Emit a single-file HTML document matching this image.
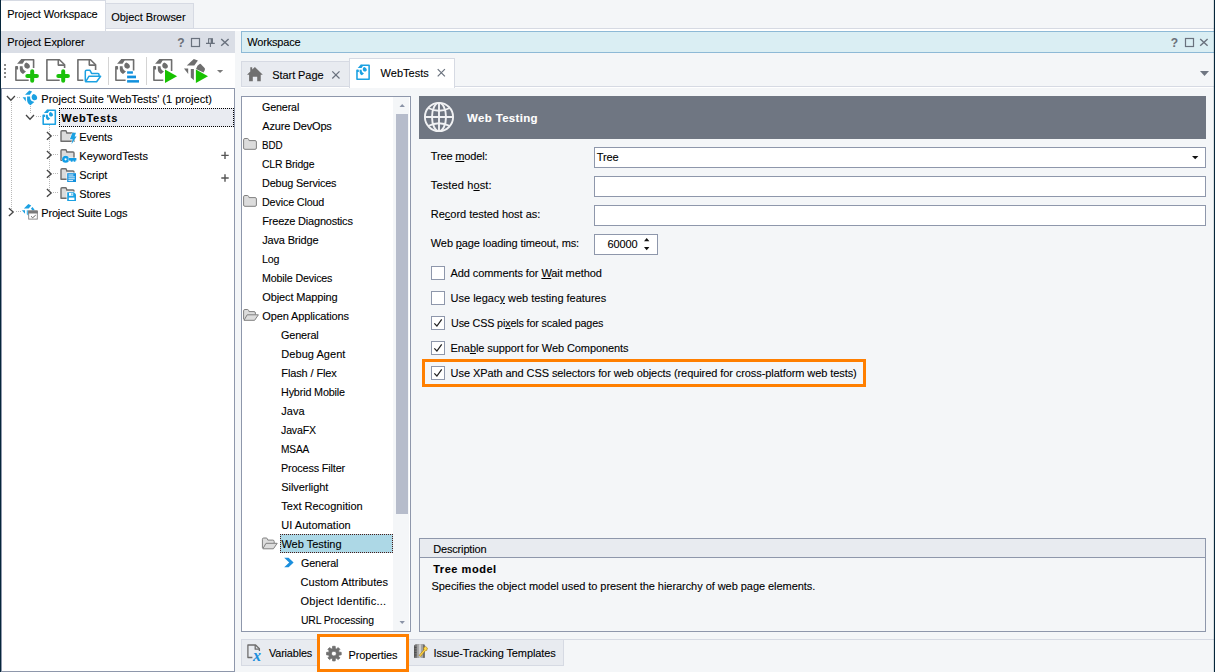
<!DOCTYPE html>
<html lang="en">
<head>
<meta charset="utf-8">
<title>TestComplete - Web Testing properties</title>
<style>
html,body{margin:0;padding:0}
body{width:1215px;height:672px;overflow:hidden;background:#f4f6f8;position:relative;
 font-family:"Liberation Sans",sans-serif;font-size:11px;line-height:14px;color:#000}
div,span,svg{position:absolute;box-sizing:border-box}
.t{white-space:pre;height:14px;transform-origin:0 0;-webkit-text-stroke:0.1px currentColor}
u{text-decoration:underline;text-underline-offset:1px}
.w{background:#fff}
.in{background:#fff;border:1px solid #8e97ab}
.cb{width:14px;height:14px;background:#fff;border:1px solid #8e97ab;left:431px}
.tab{background:#e8ebf0;border:1px solid #d6dae3}
.ln{background:#d6dae3}
</style>
</head>
<body>
<!-- window chrome -->
<div class="ln" style="left:0;top:0;width:106px;height:1px"></div>
<div class="ln" style="left:194px;top:28px;width:1020px;height:1px"></div>
<div class="w" style="left:1px;top:29px;width:1212px;height:2px"></div>
<div class="tab" style="left:105px;top:3px;width:89px;height:26px"></div>
<div class="w" style="left:1px;top:1px;width:105px;height:30px;border-right:1px solid #d6dae3"></div>

<!-- Project Explorer panel -->
<div style="left:1px;top:31px;width:234px;height:22px;background:#dadee6"></div>
<div class="w" style="left:1px;top:53px;width:234px;height:35px"></div>
<div class="w" style="left:1px;top:88px;width:234px;height:584px;border:1px solid #8e97ab"></div>
<div style="left:59px;top:108px;width:175px;height:19px;background:#e9ebf1;border:1px dotted #000"></div>

<!-- Workspace panel -->
<div style="left:241px;top:31px;width:976px;height:22px;background:#daeef3;border:1px solid #8db9d6"></div>
<div class="ln" style="left:241px;top:86px;width:973px;height:1px"></div>
<div class="w" style="left:241px;top:87px;width:972px;height:1px"></div>
<div class="tab" style="left:241px;top:61px;width:110px;height:26px"></div>
<div class="w" style="left:349px;top:58px;width:106px;height:30px;border:1px solid #d6dae3;border-bottom:0"></div>

<!-- settings tree -->
<div class="w" style="left:241px;top:96px;width:170px;height:536px;border:1px solid #8e97ab"></div>
<div style="left:393px;top:97px;width:16px;height:534px;background:#f4f6f8"></div>
<div style="left:396px;top:114px;width:12px;height:400px;background:#b6bccb"></div>
<div style="left:280px;top:534px;width:113px;height:19px;background:#add8e6;border:1px dotted #4a1c18"></div>

<!-- page header -->
<div style="left:419px;top:96px;width:787px;height:43px;background:#6f7682"></div>

<!-- inputs -->
<div class="in" style="left:594px;top:147px;width:612px;height:21px"></div>
<div class="in" style="left:594px;top:176px;width:612px;height:21px"></div>
<div class="in" style="left:594px;top:205px;width:612px;height:21px"></div>
<div class="in" style="left:594px;top:234px;width:64px;height:21px"></div>

<!-- checkboxes -->
<div class="cb" style="top:266px"></div>
<div class="cb" style="top:291px"></div>
<div class="cb" style="top:316px"></div>
<div class="cb" style="top:341px"></div>
<div class="cb" style="top:366px"></div>
<div style="left:422px;top:359px;width:444px;height:28px;border:3px solid #ff7f00"></div>

<!-- description -->
<div style="left:419px;top:538px;width:787px;height:94px;border:1px solid #8e97ab"></div>
<div style="left:420px;top:539px;width:785px;height:19px;background:#e8ebf0;border-bottom:1px solid #8e97ab"></div>

<!-- bottom tabs -->
<div class="ln" style="left:241px;top:639px;width:973px;height:1px"></div>
<div class="tab" style="left:241px;top:639px;width:77px;height:27px"></div>
<div class="tab" style="left:408px;top:639px;width:156px;height:27px"></div>
<div class="w" style="left:317px;top:634px;width:92px;height:38px;border:3px solid #ff7f00"></div>

<svg width="1215" height="672" viewBox="0 0 1215 672" style="left:0;top:0;pointer-events:none">
<!-- ===== panel caption buttons (Project Explorer) ===== -->
<g fill="none" stroke="#69717d" stroke-width="1.2">
 <rect x="191.5" y="38.5" width="8" height="8"/>
 <path d="M221.2,39 L228.6,45.8 M228.6,39 L221.2,45.8" stroke-width="1.4"/>
 <path d="M206,43.4 h8.8 M208.6,43.2 v-4.4 h3.8 v4.4 M210.4,43.6 v3.4" stroke-width="1.1"/><path d="M211.6,38.6 v4.6" stroke-width="1.9"/>
 <rect x="1185.5" y="38.5" width="8" height="8"/>
 <path d="M1200.2,39 L1207.6,45.8 M1207.6,39 L1200.2,45.8" stroke-width="1.4"/>
</g>
<!-- ===== toolbar ===== -->
<g fill="#8a8a8a">
 <rect x="4" y="64" width="2" height="2"/><rect x="4" y="68" width="2" height="2"/><rect x="4" y="72" width="2" height="2"/><rect x="4" y="76" width="2" height="2"/>
</g>
<rect x="108" y="57" width="1" height="28" fill="#d4d4d4"/>
<rect x="146" y="57" width="1" height="28" fill="#d4d4d4"/>
<!-- icon 1: new project suite item -->
<g transform="translate(15,58)">
 <g fill="none" stroke="#6e6e6e" stroke-width="1.6" stroke-linejoin="round">
  <path d="M6.3,1.8 H18.6 V10"/><path d="M13.7,22.2 H0.9 V8.9 H2.3 V11.4"/>
 </g>
 <g fill="#6e6e6e">
  <path d="M6.3,1 L10.2,1.6 L7.6,5.7 L2.1,5.7Z"/>
  <path d="M11.2,4.4 C13.5,5 15,6.8 14.9,8.6 C14.8,10.3 13.2,11 11.6,10.6 C10,10.2 9,8.6 9.3,7 C9.5,5.8 10.3,4.8 11.2,4.4Z"/>
  <path d="M4.8,8.2 L7.6,8.2 C7.4,10.6 8.6,12.4 11,13.4 L8,15.9 C5.8,15 4.8,13.2 4.8,11Z"/>
 </g>
 <path d="M12.3,18 H21.9 M17.2,13.3 V22.8" stroke="#1bc10b" stroke-width="4" stroke-linecap="round" fill="none"/>
</g>
<!-- icon 2: new document -->
<g transform="translate(46,58)">
 <g fill="none" stroke="#6e6e6e" stroke-width="1.6" stroke-linejoin="round">
  <path d="M13.7,22.2 H0.9 V1.8 H13.5 L18.6,6.8 V10"/><path d="M12.3,1.8 V7.1 H18.6"/>
 </g>
 <path d="M12.3,18 H21.9 M17.2,13.3 V22.8" stroke="#1bc10b" stroke-width="4" stroke-linecap="round" fill="none"/>
</g>
<!-- icon 3: open document -->
<g transform="translate(77,58)">
 <g fill="none" stroke="#6e6e6e" stroke-width="1.6" stroke-linejoin="round">
  <path d="M6.3,22.2 H0.9 V1.8 H13.5 L18.6,6.8 V12"/><path d="M12.3,1.8 V7.1 H18.6"/>
 </g>
 <g fill="#fff" stroke="#1ba1e2" stroke-width="1.5" stroke-linejoin="round">
  <path d="M8.3,23.6 V13.6 Q8.3,12.3 9.6,12.3 H13 L14.6,15.4 H21 Q22,15.4 22,16.6 V18.2"/>
  <path d="M8.6,23.8 L12,18.2 H23.6 L19.6,23.8Z"/>
 </g>
</g>
<!-- icon 4: project with bars -->
<g transform="translate(115,58)">
 <g fill="none" stroke="#6e6e6e" stroke-width="1.6" stroke-linejoin="round">
  <path d="M6.3,1.8 H18.6 V12.4"/><path d="M10.6,22.2 H0.9 V8.9 H2.3 V11.4"/>
 </g>
 <g fill="#6e6e6e">
  <path d="M6.3,1 L10.2,1.6 L7.6,5.7 L2.1,5.7Z"/>
  <path d="M11.2,4.4 C13.5,5 15,6.8 14.9,8.6 C14.8,10.3 13.2,11 11.6,10.6 C10,10.2 9,8.6 9.3,7 C9.5,5.8 10.3,4.8 11.2,4.4Z"/>
  <path d="M4.8,8.2 L7.6,8.2 C7.4,10.6 8.6,12.4 11,13.4 L8,15.9 C5.8,15 4.8,13.2 4.8,11Z"/>
 </g>
 <g fill="#1190dd"><rect x="12.1" y="13.3" width="5.8" height="2.4"/><rect x="12.1" y="17.6" width="8.9" height="2.7"/><rect x="12.1" y="22.1" width="11.9" height="2.5"/></g>
</g>
<!-- icon 5: run project -->
<g transform="translate(153,58)">
 <g fill="none" stroke="#6e6e6e" stroke-width="1.6" stroke-linejoin="round">
  <path d="M6.3,1.8 H18.6 V13"/><path d="M10.3,22.2 H0.9 V8.9 H2.3 V11.4"/>
 </g>
 <g fill="#6e6e6e">
  <path d="M6.3,1 L10.2,1.6 L7.6,5.7 L2.1,5.7Z"/>
  <path d="M11.2,4.4 C13.5,5 15,6.8 14.9,8.6 C14.8,10.3 13.2,11 11.6,10.6 C10,10.2 9,8.6 9.3,7 C9.5,5.8 10.3,4.8 11.2,4.4Z"/>
  <path d="M4.8,8.2 L7.6,8.2 C7.4,10.6 8.6,12.4 11,13.4 L8,15.9 C5.8,15 4.8,13.2 4.8,11Z"/>
 </g>
 <path d="M12,11.6 L24.1,18.3 L12,25Z" fill="#17c200"/>
</g>
<!-- icon 6: run suite -->
<g transform="translate(184,58)">
 <g fill="#6e6e6e">
  <path d="M2.8,7.6 L9.8,1 L13.9,2.6 L10.3,7.6Z"/>
  <path d="M0,10.5 H4.2 V16Z"/>
  <path d="M6.8,10.9 H9.9 V22.3 L6.8,19.5Z"/>
  <path d="M13.5,7.8 L15.6,6 Q16.4,5.6 17.2,6.4 L20.8,10.2 Q21.2,11.4 20.6,12.6 L19.5,14.5 L12,11Z"/>
 </g>
 <path d="M11.9,11.6 L24,18.3 L11.9,25Z" fill="#17c200"/>
</g>
<path d="M217,70 h6.2 l-3.1,3.1Z" fill="#7a7a7a"/>

<!-- ===== project tree ===== -->
<g fill="none" stroke="#b9b9b9" stroke-width="1" stroke-dasharray="1 1">
 <path d="M11.5,102 V212"/><path d="M17,97.5 H21"/><path d="M30.5,106 V114"/><path d="M36,116.5 H41"/>
 <path d="M49.5,125 V193"/><path d="M53,135.5 H58"/><path d="M53,154.5 H58"/><path d="M53,173.5 H58"/><path d="M53,192.5 H58"/><path d="M16,211.5 H21"/>
</g>
<g fill="none" stroke="#444" stroke-width="1.3">
 <path d="M6.9,96 L10.9,100.2 L14.9,96"/>
 <path d="M26,115 L30,119.2 L34,115"/>
 <path d="M46.9,132 L51.2,135.9 L46.9,139.8"/>
 <path d="M46.9,151 L51.2,154.9 L46.9,158.8"/>
 <path d="M46.9,170 L51.2,173.9 L46.9,177.8"/>
 <path d="M46.9,189 L51.2,192.9 L46.9,196.8"/>
 <path d="M8.9,208.2 L13.2,212.1 L8.9,216"/>
</g>
<g stroke="#555" stroke-width="1.4" fill="none">
 <path d="M221.3,155.4 h7.4 M225,151.7 v7.4"/><path d="M221.3,178 h7.4 M225,174.3 v7.4"/>
</g>
<!-- suite icon -->
<g fill="#1ba1e2" transform="translate(22.5,90.5)">
 <path d="M2.5,4.2 L6.8,0.1 L9.6,1.1 L7.4,4.2Z"/>
 <path d="M0.1,6.7 H3.3 V11Z"/>
 <path d="M4.6,6 H7.6 C7.4,9 8.6,10.4 10.6,11 L11.8,11.6 L8,14.7 C5.8,13.6 4.6,11.6 4.6,9.4Z"/>
 <path d="M11,3.4 C13.2,3.8 14.9,5.6 14.7,7.6 C14.5,9.4 12.9,10.2 11.3,9.7 C9.7,9.2 8.9,7.6 9.2,6 C9.4,4.9 10.1,3.9 11,3.4Z"/>
</g>
<!-- project icon (tree) -->
<g transform="translate(42.4,109) scale(0.71)">
 <g fill="none" stroke="#1ba1e2" stroke-width="2.2" stroke-linejoin="round">
  <path d="M6.3,1.8 H18.2 V21.6 H1.1 V8.9 H2.6 V11.4"/>
 </g>
 <g fill="#1ba1e2">
  <path d="M6.3,1 L10.2,1.6 L7.6,5.7 L2.1,5.7Z"/>
  <path d="M11.2,4.4 C13.5,5 15,6.8 14.9,8.6 C14.8,10.3 13.2,11 11.6,10.6 C10,10.2 9,8.6 9.3,7 C9.5,5.8 10.3,4.8 11.2,4.4Z"/>
  <path d="M4.8,8.2 L7.6,8.2 C7.4,10.6 8.6,12.4 11,13.4 L8,15.9 C5.8,15 4.8,13.2 4.8,11Z"/>
 </g>
</g>
<!-- folders in project tree -->
<g fill="#dcdcdc" stroke="#6e6e6e" stroke-width="1.4" stroke-linejoin="round">
 <path d="M61,141.3 V131.7 Q61,130.7 62,130.7 H65.4 Q66.2,130.7 66.4,131.6 L66.8,133 H73 Q74,133 74,134 V141.3Z"/>
 <path d="M61,160.3 V150.7 Q61,149.7 62,149.7 H65.4 Q66.2,149.7 66.4,150.6 L66.8,152 H73 Q74,152 74,153 V160.3Z"/>
 <path d="M61,179.3 V169.7 Q61,168.7 62,168.7 H65.4 Q66.2,168.7 66.4,169.6 L66.8,171 H73 Q74,171 74,172 V179.3Z"/>
 <path d="M61,198.3 V188.7 Q61,187.7 62,187.7 H65.4 Q66.2,187.7 66.4,188.6 L66.8,190 H73 Q74,190 74,191 V198.3Z"/>
</g>
<!-- events bolt -->
<path d="M72.4,132.8 H76 L74.6,136.6 H76.6 L71.5,144.2 L72.6,139.2 H69.9Z" fill="#1ba1e2" stroke="#fff" stroke-width="0.9" paint-order="stroke"/>
<!-- keyword key -->
<g stroke="#fff" stroke-width="0.8" paint-order="stroke" fill="#109de6">
 <circle cx="65.6" cy="159.3" r="3.5" stroke="#fff"/><circle cx="65.6" cy="159.3" r="1.1" fill="#fff" stroke="none"/>
 <path d="M68.4,158 H76.4 V160.4 H75.4 V161.8 H73.6 V160.4 H72.6 V161.8 H70.8 V160.4 H68.4Z"/>
</g>
<!-- script doc -->
<g>
 <rect x="66.6" y="172.6" width="9.8" height="9.8" fill="#fff"/>
 <rect x="67.2" y="173.2" width="8.8" height="8.8" fill="#1190dd"/>
 <path d="M68.4,175 H73.4 M68.4,176.9 H74.8 M68.4,178.8 H74.8 M68.4,180.6 H73" stroke="#fff" stroke-width="0.9"/>
</g>
<!-- stores floppy -->
<g>
 <rect x="66.6" y="191.6" width="9.8" height="9.8" fill="#fff"/>
 <path d="M67.2,192.2 H74 L76,194.2 V201 H67.2Z" fill="#1ba1e2"/>
 <rect x="69" y="193" width="4.2" height="2.8" fill="#fff"/><rect x="71.4" y="193.3" width="1" height="2" fill="#1ba1e2"/>
 <rect x="68.8" y="197.6" width="5.6" height="2.4" fill="#fff"/>
</g>
<!-- suite logs icon -->
<g fill="#1ba1e2" transform="translate(21.8,203.8)">
 <path d="M2.1,4.8 L6.6,0.1 L9.4,1.6 L6.9,4.8Z"/>
 <path d="M0.1,6.4 H3.2 V10Z"/>
 <path d="M4.95,6.4 H6.9 V12.2 L4.95,10.5Z" opacity=".75"/>
 <path d="M9.2,4.6 L10.8,3.2 L13,6.4 L10.5,6.6Z"/>
</g>
<g>
 <rect x="28.7" y="211" width="8.6" height="8.1" fill="#fff" stroke="#808080" stroke-width="0.9"/>
 <path d="M28.2,213.4 V211.4 Q28.2,210.4 29.2,210.4 H36.8 Q37.8,210.4 37.8,211.4 V213.4Z" fill="#7a7a7a"/>
 <path d="M31,216.3 l1.7,1.4 l3,-2.5" fill="none" stroke="#666" stroke-width="1"/>
</g>

<!-- ===== doc tabs ===== -->
<path d="M254.9,66.9 L262.8,74.8 H260.75 V81.25 H257.2 V76.7 H252.8 V81.25 H249.1 V74.8 H247 L250.3,71.5 V67.3 H252.2 V69.6Z" fill="#707070"/>
<g fill="none" stroke="#69717d" stroke-width="1.2">
 <path d="M332.3,71.3 l7.2,7.2 M339.5,71.3 l-7.2,7.2"/>
 <path d="M437.7,69.2 l7.2,7.2 M444.9,69.2 l-7.2,7.2"/>
</g>
<g transform="translate(356.2,64) scale(0.71)">
 <g fill="none" stroke="#1ba1e2" stroke-width="2.2" stroke-linejoin="round">
  <path d="M6.3,1.8 H18.2 V21.6 H1.1 V8.9 H2.6 V11.4"/>
 </g>
 <g fill="#1ba1e2">
  <path d="M6.3,1 L10.2,1.6 L7.6,5.7 L2.1,5.7Z"/>
  <path d="M11.2,4.4 C13.5,5 15,6.8 14.9,8.6 C14.8,10.3 13.2,11 11.6,10.6 C10,10.2 9,8.6 9.3,7 C9.5,5.8 10.3,4.8 11.2,4.4Z"/>
  <path d="M4.8,8.2 L7.6,8.2 C7.4,10.6 8.6,12.4 11,13.4 L8,15.9 C5.8,15 4.8,13.2 4.8,11Z"/>
 </g>
</g>
<path d="M1200,71 h9 l-4.5,5Z" fill="#6f7682"/>

<!-- ===== settings tree ===== -->
<g fill="#dcdcdc" stroke="#808080" stroke-width="1" stroke-linejoin="round">
 <path d="M243.6,148 V139.8 Q243.6,138.5 244.9,138.5 H247.4 Q248.3,138.5 248.6,139.4 L249,140.6 H255.1 Q256.4,140.6 256.4,141.9 V148 Q256.4,149.3 255.1,149.3 H244.9 Q243.6,149.3 243.6,148Z"/>
 <path d="M243.6,205 V196.8 Q243.6,195.5 244.9,195.5 H247.4 Q248.3,195.5 248.6,196.4 L249,197.6 H255.1 Q256.4,197.6 256.4,198.9 V205 Q256.4,206.3 255.1,206.3 H244.9 Q243.6,206.3 243.6,205Z"/>
</g>
<g fill="#dcdcdc" stroke="#808080" stroke-width="1" stroke-linejoin="round">
 <path d="M243.6,319.4 V310.8 Q243.6,309.5 244.9,309.5 H247.4 Q248.3,309.5 248.6,310.4 L249,311.6 H254 Q255.4,311.6 255.4,313 V314.8"/>
 <path d="M244,320.3 L247.2,314.8 H258.4 L254.6,320.3Z"/>
 <path d="M262.4,547.9 V539.3 Q262.4,538 263.7,538 H266.2 Q267.1,538 267.4,538.9 L267.8,540.1 H272.8 Q274.2,540.1 274.2,541.5 V543.3"/>
 <path d="M262.8,548.8 L266,543.3 H277.2 L273.4,548.8Z"/>
</g>
<path d="M284.2,557.8 H288.6 L293.6,562.5 L288.6,567.2 H284.2 L289.2,562.5Z" fill="#1b8fdd"/>
<path d="M399.5,107 h5.4 l-2.7,-3Z" fill="#8a93a6"/>
<path d="M399.5,621 h5.4 l-2.7,3Z" fill="#8a93a6"/>

<!-- ===== globe ===== -->
<g fill="none" stroke="#f0f1f3" stroke-width="1.9">
 <circle cx="439" cy="117" r="14.1"/>
 <ellipse cx="439" cy="117" rx="7" ry="14.1"/>
 <path d="M439,103 V131 M425,117 H453"/>
 <path d="M428.2,108 Q439,113.4 449.8,108 M428.2,126 Q439,120.6 449.8,126"/>
</g>

<!-- ===== inputs ===== -->
<path d="M1192,156 h6.4 l-3.2,3.2Z" fill="#111"/>
<path d="M644,241.2 h5.4 l-2.7,-3.2Z M644,247 h5.4 l-2.7,3.2Z" fill="#111"/>
<!-- checks -->
<g fill="none" stroke="#222" stroke-width="1.2">
 <path d="M434.3,323.4 L436.9,326 L441.7,319.3"/>
 <path d="M434.3,348.4 L436.9,351 L441.7,344.3"/>
 <path d="M434.3,373.4 L436.9,376 L441.7,369.3"/>
</g>

<!-- ===== bottom tabs ===== -->
<g fill="none" stroke="#6e6e6e" stroke-width="1.3" stroke-linejoin="round">
 <path d="M252.4,657.5 H247.9 V645 H255.6 L259.4,648.8 V651"/><path d="M255.2,645 V649.2 H259.4"/>
</g>
<path d="M326.6,652.3 L328.7,652.2 L329.2,650.9 L327.9,649.3 L329.6,647.6 L331.2,648.9 L332.5,648.4 L332.6,646.3 L335.2,646.3 L335.3,648.4 L336.6,648.9 L338.2,647.6 L339.9,649.3 L338.6,650.9 L339.1,652.2 L341.2,652.3 L341.2,654.9 L339.1,655.0 L338.6,656.3 L339.9,657.9 L338.2,659.6 L336.6,658.3 L335.3,658.8 L335.2,660.9 L332.6,660.9 L332.5,658.8 L331.2,658.3 L329.6,659.6 L327.9,657.9 L329.2,656.3 L328.7,655.0 L326.6,654.9Z M333.9,651.2 a2.4,2.4 0 1,0 0.01,0Z" fill="#707070" fill-rule="evenodd" stroke="#707070" stroke-width="0.8" stroke-linejoin="round"/>
<g>
 <path d="M414.2,645.4 L415.2,644.3 H423.6 L424.8,645.6 V657.8 H414.2Z" fill="#8c8c8c"/>
 <rect x="414.2" y="645.4" width="1.4" height="12.4" fill="#4e4e4e"/>
 <rect x="415.6" y="644.6" width="1.6" height="13.2" fill="#7a7a7a"/>
 <rect x="417.2" y="644.3" width="1.8" height="13.5" fill="#a9a9a9"/>
 <rect x="419" y="644.3" width="2.4" height="13.5" fill="#cfcfcf"/>
 <rect x="421.4" y="644.3" width="1.6" height="13.5" fill="#a4a4a4"/>
 <rect x="423" y="644.6" width="1.8" height="13.2" fill="#6e6e6e"/>
</g>
<path d="M414.4,647.5 h2.2 M414.4,650 h2.2 M414.4,652.5 h2.2 M414.4,655 h2.2" stroke="#3c3c3c" stroke-width="0.6"/>
<path d="M419.1,655.4 L424,649.6 L423.4,648 L425.4,646.4 L427.4,648 L426.8,650.4 L425.2,650.8 L420.6,656.4Z" fill="#ffd84a" stroke="#a8770a" stroke-width="0.6"/>
</svg>

<!-- window edges -->
<div style="left:0;top:0;width:1px;height:672px;background:#06263b"></div>
<div style="left:1213px;top:0;width:1px;height:672px;background:rgba(6,38,59,.12)"></div>
<div style="left:1214px;top:0;width:1px;height:672px;background:#06263b"></div>

<span class="t" style="left:7.3px;top:7.0px;letter-spacing:-0.11px">Project Workspace</span>
<span class="t" style="left:111.3px;top:10.0px;letter-spacing:-0.07px">Object Browser</span>
<span class="t" style="left:7.3px;top:35.0px;letter-spacing:-0.06px">Project Explorer</span>
<span class="t" style="left:247.3px;top:35.0px;letter-spacing:-0.19px">Workspace</span>
<span class="t" style="left:272.3px;top:68.0px;letter-spacing:-0.08px">Start Page</span>
<span class="t" style="left:380.5px;top:66.0px;letter-spacing:0.04px">WebTests</span>
<span class="t" style="left:41.3px;top:91.5px;letter-spacing:0.01px">Project Suite 'WebTests' (1 project)</span>
<span class="t" style="left:61.3px;top:110.5px;letter-spacing:0.72px;font-weight:bold">WebTests</span>
<span class="t" style="left:79.3px;top:129.5px;letter-spacing:-0.07px">Events</span>
<span class="t" style="left:79.3px;top:148.5px;letter-spacing:0.01px">KeywordTests</span>
<span class="t" style="left:79.3px;top:167.5px;letter-spacing:-0.02px">Script</span>
<span class="t" style="left:79.3px;top:186.5px;letter-spacing:-0.10px">Stores</span>
<span class="t" style="left:41.3px;top:205.5px;letter-spacing:-0.18px">Project Suite Logs</span>
<span class="t" style="left:262.3px;top:99.5px;letter-spacing:-0.15px;transform:scaleX(0.975)">General</span>
<span class="t" style="left:262.3px;top:118.5px;letter-spacing:-0.18px">Azure DevOps</span>
<span class="t" style="left:262.3px;top:137.5px;letter-spacing:-0.15px;transform:scaleX(0.894)">BDD</span>
<span class="t" style="left:262.3px;top:156.5px;letter-spacing:-0.15px;transform:scaleX(0.946)">CLR Bridge</span>
<span class="t" style="left:262.3px;top:175.5px;letter-spacing:-0.15px;transform:scaleX(0.984)">Debug Services</span>
<span class="t" style="left:262.3px;top:194.5px;letter-spacing:-0.15px;transform:scaleX(0.977)">Device Cloud</span>
<span class="t" style="left:262.3px;top:213.5px;letter-spacing:-0.21px">Freeze Diagnostics</span>
<span class="t" style="left:262.3px;top:232.5px;letter-spacing:-0.18px">Java Bridge</span>
<span class="t" style="left:262.3px;top:251.5px;letter-spacing:-0.15px;transform:scaleX(0.969)">Log</span>
<span class="t" style="left:262.3px;top:270.5px;letter-spacing:-0.15px;transform:scaleX(0.970)">Mobile Devices</span>
<span class="t" style="left:262.3px;top:289.5px;letter-spacing:-0.13px">Object Mapping</span>
<span class="t" style="left:262.3px;top:308.5px;letter-spacing:-0.12px">Open Applications</span>
<span class="t" style="left:281.3px;top:327.5px;letter-spacing:-0.15px;transform:scaleX(0.986)">General</span>
<span class="t" style="left:281.3px;top:346.5px;letter-spacing:0.05px">Debug Agent</span>
<span class="t" style="left:281.3px;top:365.5px;letter-spacing:-0.12px">Flash / Flex</span>
<span class="t" style="left:281.3px;top:384.5px;letter-spacing:-0.15px;transform:scaleX(0.979)">Hybrid Mobile</span>
<span class="t" style="left:281.3px;top:403.5px;letter-spacing:0.02px">Java</span>
<span class="t" style="left:281.3px;top:422.5px;letter-spacing:-0.15px;transform:scaleX(0.960)">JavaFX</span>
<span class="t" style="left:281.3px;top:441.5px;letter-spacing:-0.15px;transform:scaleX(0.921)">MSAA</span>
<span class="t" style="left:281.3px;top:460.5px;letter-spacing:-0.15px;transform:scaleX(0.982)">Process Filter</span>
<span class="t" style="left:281.3px;top:479.5px;letter-spacing:-0.07px">Silverlight</span>
<span class="t" style="left:281.3px;top:498.5px;letter-spacing:-0.00px">Text Recognition</span>
<span class="t" style="left:281.3px;top:517.5px;letter-spacing:0.02px">UI Automation</span>
<span class="t" style="left:281.4px;top:536.5px;letter-spacing:0.01px">Web Testing</span>
<span class="t" style="left:300.6px;top:555.5px;letter-spacing:-0.15px;transform:scaleX(0.978)">General</span>
<span class="t" style="left:300.6px;top:574.5px;letter-spacing:0.03px">Custom Attributes</span>
<span class="t" style="left:300.6px;top:593.5px;letter-spacing:0.19px">Object Identific...</span>
<span class="t" style="left:300.6px;top:612.5px;letter-spacing:-0.15px;transform:scaleX(0.946)">URL Processing</span>
<span class="t" style="left:467.1px;top:111.0px;letter-spacing:0.32px;font-weight:bold;color:#fff;font-size:11.5px">Web Testing</span>
<span class="t" style="left:430.8px;top:149.0px;letter-spacing:-0.15px">Tree <u>m</u>odel:</span>
<span class="t" style="left:430.8px;top:178.0px;letter-spacing:0.13px">Tested h<u>o</u>st:</span>
<span class="t" style="left:430.8px;top:207.0px;letter-spacing:-0.03px">Re<u>c</u>ord tested host as:</span>
<span class="t" style="left:430.8px;top:236.0px;letter-spacing:-0.11px">Web <u>p</u>age loading timeout, ms:</span>
<span class="t" style="left:596.8px;top:150.0px;letter-spacing:-0.14px">Tree</span>
<span class="t" style="left:607.5px;top:237.0px;letter-spacing:-0.12px">60000</span>
<span class="t" style="left:450.6px;top:266.0px;letter-spacing:-0.09px">Add comments for <u>W</u>ait method</span>
<span class="t" style="left:450.6px;top:291.0px;letter-spacing:-0.01px">Use legac<u>y</u> web testing features</span>
<span class="t" style="left:450.6px;top:316.0px;letter-spacing:-0.15px;transform:scaleX(0.979)">Use CSS pi<u>x</u>els for scaled pages</span>
<span class="t" style="left:450.6px;top:341.0px;letter-spacing:-0.09px">Ena<u>b</u>le support for Web Components</span>
<span class="t" style="left:450.6px;top:366.0px;letter-spacing:-0.08px">Use XPath and CSS selectors for web ob<u>j</u>ects (required for cross-platform web tests)</span>
<span class="t" style="left:433.2px;top:542.0px;letter-spacing:-0.16px">Description</span>
<span class="t" style="left:433.2px;top:561.5px;letter-spacing:0.54px;font-weight:bold">Tree model</span>
<span class="t" style="left:431.5px;top:579.0px;letter-spacing:-0.05px">Specifies the object model used to present the hierarchy of web page elements.</span>
<span class="t" style="left:177.3px;top:36.0px;letter-spacing:-0.54px;font-weight:bold;color:#6b7079;font-size:12px">?</span>
<span class="t" style="left:1170.8px;top:36.0px;letter-spacing:-0.54px;font-weight:bold;color:#6b7079;font-size:12px">?</span>
<span class="t" style="left:253.0px;top:648.6px;letter-spacing:1.20px;color:#1b8fdd;font-size:16px;font-family:'Liberation Serif',serif;font-style:italic;font-weight:bold">x</span>
<span class="t" style="left:269.4px;top:646.0px;letter-spacing:-0.15px;transform:scaleX(0.985)">Variables</span>
<span class="t" style="left:348.4px;top:648.0px;letter-spacing:-0.10px">Properties</span>
<span class="t" style="left:433.5px;top:646.0px;letter-spacing:-0.11px">Issue-Tracking Templates</span>
</body>
</html>
